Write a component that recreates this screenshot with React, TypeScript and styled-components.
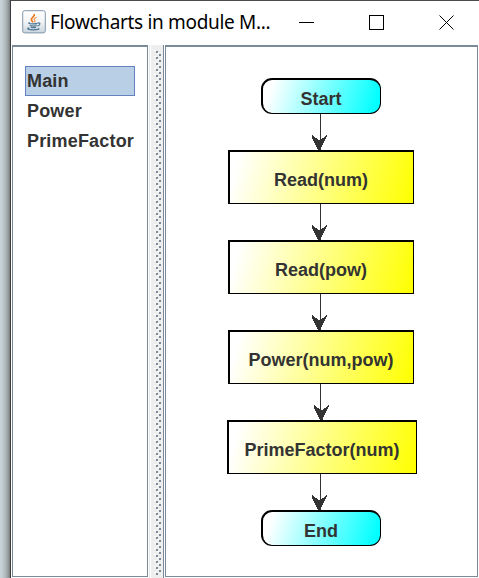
import React from "react";
import styled, { createGlobalStyle } from "styled-components";

const GlobalStyle = createGlobalStyle`
  * { box-sizing: border-box; }
  body { margin: 0; background: #fff; overflow: hidden; }
`;

const Screen = styled.div`
  display: flex;
  width: 479px;
  height: 578px;
  overflow: hidden;
  font-family: "Liberation Sans", Arial, sans-serif;
`;

const Backdrop = styled.div`
  width: 11px;
  flex: none;
  background: linear-gradient(90deg, #c9d5da 0, #c0cace 3px, #a3abae 7px, #7b8082 10px);
  border-right: 1px solid #3c3c3c;
`;

const Frame = styled.div`
  flex: 1;
  min-width: 0;
  display: flex;
  flex-direction: column;
  border-top: 1px solid #4c4c4c;
  background: #fff;
`;

const TitleBar = styled.header`
  display: flex;
  align-items: center;
  height: 44px;
  flex: none;
  padding: 0 0 2px 11px;
`;

const AppIcon = styled.svg`
  width: 24px;
  height: 24px;
  flex: none;
`;

const Title = styled.h1`
  margin: 0 0 0 4px;
  width: 222px;
  flex: none;
  font: 400 19px/26px "Noto Sans", "Open Sans", sans-serif;
  letter-spacing: -0.33px;
  color: #000;
  white-space: nowrap;
`;

const WindowButton = styled.button`
  width: 70px;
  height: 42px;
  flex: none;
  padding: 0;
  border: 0;
  background: none;
  display: grid;
  place-items: center;
`;

const Controls = styled.div`
  display: flex;
  flex: none;
`;

const Body = styled.main`
  display: flex;
  flex: 1;
  min-height: 0;
`;

const Pane = styled.section<{ $width: number }>`
  width: ${(p) => p.$width}px;
  flex: none;
  height: 532px;
  border: 1px solid #7a8a99;
  border-top-width: 2px;
  background: #fff;
`;

const ListPane = styled(Pane)`
  margin-left: 1px;
  padding: 19px 12px;
`;

const Item = styled.div<{ $selected?: boolean }>`
  height: 30px;
  width: 110px;
  padding-left: 1px;
  border: 1px solid ${(p) => (p.$selected ? "#6382bf" : "transparent")};
  background: ${(p) => (p.$selected ? "#b8cfe5" : "transparent")};
  color: #333;
  font-size: 18px;
  font-weight: 700;
  letter-spacing: 0.18px;
  line-height: 28px;
  white-space: nowrap;
`;

const Divider = styled.div`
  width: 17px;
  flex: none;
  display: flex;
  border-left: 1px solid #fff;
  border-right: 1px solid #fff;
  background: #eee;
`;

const DividerEdge = styled.div<{ $right?: boolean }>`
  width: ${(p) => (p.$right ? 1 : 2)}px;
  background: ${(p) => (p.$right ? "#7a8a99" : "linear-gradient(90deg, #e5e8ea 50%, #fff 50%)")};
`;

const Grip = styled.svg`
  flex: 1;
  min-width: 0;
  height: 533px;
  display: block;
`;

const Flow = styled.div`
  display: flex;
  flex-direction: column;
  align-items: center;
  padding-top: 31px;
  width: 309px;
`;

const Node = styled.div<{ $width: number; $terminal?: boolean; $indent?: number }>`
  width: ${(p) => p.$width}px;
  height: ${(p) => (p.$terminal ? 36 : 54)}px;
  margin-left: ${(p) => p.$indent ?? 0}px;
  padding-top: 2px;
  border: solid #000;
  border-width: 2px 1px 1px 2px;
  border-radius: ${(p) => (p.$terminal ? 11 : 0)}px;
  background: linear-gradient(${(p) => (p.$terminal ? "107deg, #fff 8%, #0ff 96%" : "105deg, #fff 5%, #ff0 100%")});
  color: #333;
  font-size: 18px;
  font-weight: 700;
  line-height: ${(p) => (p.$terminal ? 35 : 53)}px;
  text-align: center;
  white-space: nowrap;
`;

const Arrow = styled.svg`
  width: 17px;
  height: 36px;
  margin-right: 1px;
  display: block;
  flex: none;
`;

const names = ["Main", "Power", "PrimeFactor"];

const steps = [
  { text: "Start", width: 120, terminal: true },
  { text: "Read(num)", width: 186 },
  { text: "Read(pow)", width: 186 },
  { text: "Power(num,pow)", width: 186 },
  { text: "PrimeFactor(num)", width: 190, shift: 2, indent: 2 },
  { text: "End", width: 120, terminal: true },
];

function JavaIcon() {
  return (
    <AppIcon viewBox="0 0 24 24" fill="none">
      <defs>
        <linearGradient id="tile" x2="0" y2="1">
          <stop stopColor="#fff" />
          <stop offset=".5" stopColor="#f2f4f5" />
          <stop offset="1" stopColor="#cbd5dd" />
        </linearGradient>
      </defs>
      <rect x=".7" y=".7" width="22.6" height="22.2" rx="2" fill="url(#tile)" stroke="#7f97ac" />
      <path d="M12.2 4c1.2 2.5-3.6 3.6-2.8 6 .3 1 1.2 1.6 1.7 2.4" stroke="#e87b22" strokeWidth="1.7" />
      <path d="M14.6 7.3c-2.6 1.2-2.8 2.2-1.8 3.3.5.6.2 1.1-.3 1.7" stroke="#ed9550" strokeWidth="1.2" />
      <path d="M7.8 12.6c-2 .7-.8 1.3 3.6 1.3 2 0 3.3-.2 4.2-.5M8.3 14.8c-.6 1.3 4.1 1.6 6.4.7M8.9 16.8c.2 1.1 3.7 1.1 5.2.5M15.8 13c2.8-.6 2.8 2.2-.4 3.1M7.3 17.9c-3.5.7-.7 2 4.4 1.9 3.7 0 6.2-.7 4.8-1.4" stroke="#4d7896" strokeWidth="1.25" />
    </AppIcon>
  );
}

function FlowArrow({ shift = 0 }: { shift?: number }) {
  return (
    <Arrow viewBox="0 0 17 36" shapeRendering="crispEdges">
      <path d="M8 0h1v36H8z" fill="#333" />
      <path
        transform={`translate(${shift} 0)`}
        d="M0 21h1v1h1v1h1v1h2v1h1v1h3v-1h1v-1h2v-1h1v-1h1v-1h1v2h-1v2h-1v2h-1v2h-1v2h-1v2h-1v2H9v2H6v-2H5v-2H4v-2H3v-2H2v-2H1v-2H0z"
        fill="#333"
      />
    </Arrow>
  );
}

export default function App() {
  return (
    <Screen>
      <GlobalStyle />
      <Backdrop />
      <Frame>
        <TitleBar>
          <JavaIcon />
          <Title>Flowcharts in module M...</Title>
          <Controls>
            <WindowButton aria-label="Minimize">
              <svg width="16" height="16" stroke="#000" shapeRendering="crispEdges"><path d="M0 8.5h15" /></svg>
            </WindowButton>
            <WindowButton aria-label="Maximize">
              <svg width="16" height="16" fill="none" stroke="#000" shapeRendering="crispEdges"><path d="M.5 1.5h14v14H.5z" /></svg>
            </WindowButton>
            <WindowButton aria-label="Close">
              <svg width="16" height="16" stroke="#000"><path d="m.5 1.5 14 14m0-14-14 14" /></svg>
            </WindowButton>
          </Controls>
        </TitleBar>
        <Body>
          <ListPane $width={136}>
            {names.map((n, i) => <Item key={n} $selected={i === 0}>{n}</Item>)}
          </ListPane>
          <Divider>
            <DividerEdge />
            <Grip shapeRendering="crispEdges">
              <defs>
                <pattern id="grip" width="12" height="6" y="5" patternUnits="userSpaceOnUse">
                  <path d="M3 0h2v1H3zM6 3h2v1H6z" fill="#fff" />
                  <path d="M5 1h2v2H5zM8 4h2v2H8z" fill="#7a8a99" />
                </pattern>
              </defs>
              <rect y="5" width="12" height="525" fill="url(#grip)" />
            </Grip>
            <DividerEdge $right />
          </Divider>
          <Pane $width={313}>
            <Flow>
              {steps.map((s, i) => (
                <React.Fragment key={s.text}>
                  {i > 0 && <FlowArrow shift={s.shift} />}
                  <Node $width={s.width} $terminal={s.terminal} $indent={s.indent}>{s.text}</Node>
                </React.Fragment>
              ))}
            </Flow>
          </Pane>
        </Body>
      </Frame>
    </Screen>
  );
}
